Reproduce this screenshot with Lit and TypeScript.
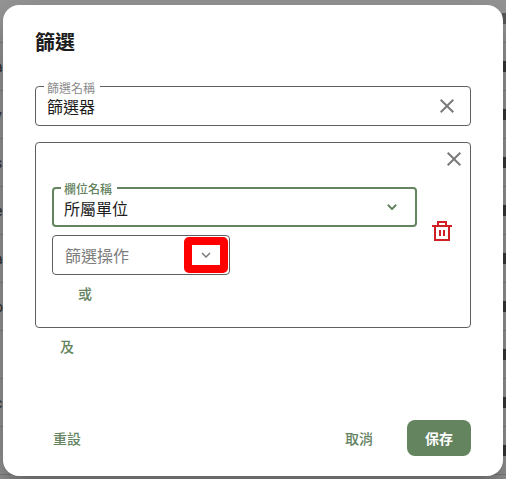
import { LitElement, html, css } from "lit";
import { customElement } from "lit/decorators.js";

const closeIcon = html`<svg class="x" viewBox="0 0 24 24"><path d="M19 6.41 17.59 5 12 10.59 6.41 5 5 6.41 10.59 12 5 17.59 6.41 19 12 13.41 17.59 19 19 17.59 13.41 12z"/></svg>`;
const chevron = html`<svg class="chev" viewBox="0 0 24 24"><path d="M7.41 8.59 12 13.17l4.59-4.58L18 10l-6 6-6-6z"/></svg>`;
const leftGlyphs = ["", "a", "v", "s", "e", "a", "o", "i", "c", "l"];

@customElement("app-root")
export class AppRoot extends LitElement {
  static styles = css`
    :host { display: block; width: 506px; height: 479px; position: relative; overflow: hidden; background: #989898; font-family: Roboto, "Noto Sans CJK TC", sans-serif; }
    .table { position: absolute; inset: 0; display: flex; flex-direction: column; }
    .row { flex: none; height: 48px; box-sizing: border-box; border-bottom: 1px solid #838383; display: flex; align-items: center; justify-content: space-between; font-size: 14px; color: #2c2c2c; }
    .row:first-child { height: 43px; align-items: flex-start; padding-top: 13px; }
    .row:first-child .r { background: #5a5a5a; }
    .row .l { margin-left: -5px; }
    .row .r { width: 4px; height: 11px; background: #3a3a3a; }
    .dialog { position: absolute; left: 3px; top: 5px; width: 500px; height: 471px; box-sizing: border-box; background: #fff; border-radius: 16px; padding: 24px 32px 20px; display: flex; flex-direction: column; box-shadow: 0 11px 15px -7px rgba(0,0,0,.2), 0 24px 38px 3px rgba(0,0,0,.14), 0 9px 46px 8px rgba(0,0,0,.12); }
    h2 { margin: 0; font-size: 20px; line-height: 28px; font-weight: 700; color: #1d1d1d; }
    .field { position: relative; box-sizing: border-box; border: 1px solid #5f5f5f; border-radius: 4px; display: flex; align-items: center; height: 40px; }
    .name { margin-top: 29px; padding: 0 11px; }
    .legend { position: absolute; left: 8px; top: -4px; padding: 0 5px 0 3px; background: #fff; font-size: 12px; line-height: 13px; color: #8b8b8b; }
    .value { flex: 1; font-size: 16px; color: #1d1d1d; padding-bottom: 1px; }
    svg { display: block; flex: none; }
    .x { width: 24px; height: 24px; fill: #7a7a7a; }
    .box { margin-top: 16px; box-sizing: border-box; height: 186px; border: 1px solid #5f5f5f; border-radius: 4px; padding: 44px 16px 0; display: flex; gap: 13px; position: relative; }
    .box > .x { position: absolute; right: 4px; top: 4px; }
    .col { width: 365px; display: flex; flex-direction: column; align-items: flex-start; }
    .focus { width: 365px; border: 2px solid #64835f; padding: 0 4px 0 10px; height: 40px; }
    .focus .legend { color: #64835f; left: 7px; top: -5px; font-weight: 500; }
    .focus .value { padding: 1px 0 0; }
    .focus .chev { width: 18px; height: 18px; fill: #64835f; stroke: #64835f; stroke-width: 1; margin-right: 10px; }
    .op { width: 178px; margin-top: 8px; padding: 0 0 0 12px; }
    .placeholder { flex: 1; font-size: 16px; color: #7d7d7d; padding-bottom: 1px; }
    .hl { position: absolute; right: 1px; top: 1px; width: 28px; height: 20px; border: 8px solid #f00; border-radius: 5px; background: #fff; display: flex; align-items: center; justify-content: center; }
    .hl .chev { width: 18px; height: 18px; fill: #7a7a7a; }
    .link { font-size: 14px; font-weight: 500; line-height: 20px; color: #64835f; }
    .or { margin: 9px 0 0 26px; }
    .trash { width: 24px; height: 24px; fill: #cf1f25; margin-top: 32px; }
    .and { margin: 9px 0 0 25px; }
    .actions { margin-top: auto; display: flex; align-items: center; }
    .reset { margin-left: 18px; }
    .spacer { flex: 1; }
    .actions .link { padding-top: 1px; }
    .save { margin-left: 34px; width: 64px; height: 36px; border-radius: 8px; background: #64835f; color: #fff; display: flex; align-items: center; justify-content: center; font-size: 14px; font-weight: 700; }
  `;

  render() {
    return html`
      <div class="table">
        ${leftGlyphs.map((g) => html`<div class="row"><span class="l">${g}</span><span class="r"></span></div>`)}
      </div>
      <div class="dialog">
        <h2>篩選</h2>
        <div class="field name">
          <span class="legend">篩選名稱</span>
          <span class="value">篩選器</span>
          ${closeIcon}
        </div>
        <div class="box">
          ${closeIcon}
          <div class="col">
            <div class="field focus">
              <span class="legend">欄位名稱</span>
              <span class="value">所屬單位</span>
              ${chevron}
            </div>
            <div class="field op">
              <span class="placeholder">篩選操作</span>
              <div class="hl">${chevron}</div>
            </div>
            <span class="link or">或</span>
          </div>
          <svg class="trash" viewBox="0 0 24 24"><path fill-rule="evenodd" d="M7 2h10v4h5v2h-2v14H4V8H2V6h5V2zm2 2v2h6V4H9zM6 8v12h12V8H6zm3 3h2v6H9v-6zm4 0h2v6h-2v-6z"/></svg>
        </div>
        <span class="link and">及</span>
        <div class="actions">
          <span class="link reset">重設</span>
          <span class="spacer"></span>
          <span class="link">取消</span>
          <div class="save">保存</div>
        </div>
      </div>
    `;
  }
}
